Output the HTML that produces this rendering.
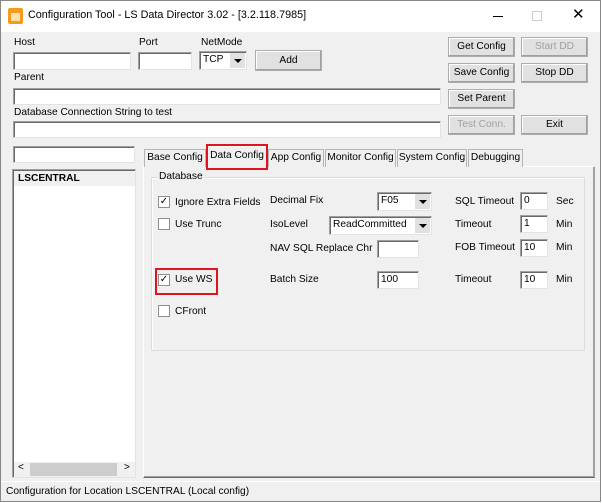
<!DOCTYPE html>
<html><head><style>
*{box-sizing:border-box;margin:0;padding:0}
body{width:602px;height:503px;background:#fff;font-family:"Liberation Sans",sans-serif;font-size:10.2px;color:#000;position:relative;overflow:hidden}
.a{position:absolute;white-space:nowrap}
.win{position:absolute;left:0;top:0;width:601px;height:502px;border:1px solid #888;background:#f0f0f0}
.tb{position:absolute;left:0;top:0;width:599px;height:31px;background:#fff}
.in{position:absolute;background:#fff;border:1px solid #a0a0a0;border-right-color:#e3e3e3;border-bottom-color:#e3e3e3;box-shadow:inset 1px 1px 0 #696969;padding:2px 3px;font-size:10.2px;white-space:nowrap}
.bt{position:absolute;background:#e1e1e1;border:1px solid #adadad;box-shadow:inset -1px -1px 0 #a0a0a0,inset 1px 1px 0 #fff;text-align:center;font-size:10.2px;white-space:nowrap}
.dis{color:#a0a0a0}
.cb{position:absolute;width:12px;height:12px;background:#fff;border:1px solid #8f8f8f;font-size:10px;line-height:10px;text-align:center}
.dd{position:absolute;right:1px;top:1px;width:15px;bottom:1px;background:#e1e1e1}
.dd:after{content:"";position:absolute;left:4px;top:6px;border:4px solid transparent;border-top:4px solid #000;border-bottom:0}
.tab{position:absolute;top:149px;height:18px;border:1px solid #b5b5b5;border-bottom:none;background:#f0f0f0;text-align:center;line-height:16px;white-space:nowrap}
.red{position:absolute;border:2px solid #e0141e}
</style></head><body>
<div class="win">
<div class="tb"></div>
</div>
<div class="a" style="left:8px;top:8px;width:15px;height:16px;background:#f39c1c;border-radius:2px"></div>
<div class="a" style="left:11px;top:13px;width:9px;height:8px;background:#fde2b0"></div>
<div class="a" style="left:28px;top:9px;font-size:10.8px">Configuration Tool - LS Data Director 3.02 - [3.2.118.7985]</div>
<div class="a" style="left:493px;top:16px;width:10px;height:1px;background:#000"></div>
<div class="a" style="left:532px;top:11px;width:10px;height:10px;border:1px solid #ccc"></div>
<div class="a" style="left:572px;top:5px;font-size:15px">✕</div>

<div class="a" style="left:14px;top:37px">Host</div>
<div class="in" style="left:13px;top:52px;width:118px;height:18px"></div>
<div class="a" style="left:139px;top:37px">Port</div>
<div class="in" style="left:138px;top:52px;width:54px;height:18px"></div>
<div class="a" style="left:201px;top:37px">NetMode</div>
<div class="in" style="left:199px;top:51px;width:48px;height:19px">TCP<div class="dd"></div></div>
<div class="bt" style="left:255px;top:50px;width:67px;height:21px;line-height:19px">Add</div>
<div class="a" style="left:14px;top:72px">Parent</div>
<div class="in" style="left:13px;top:88px;width:428px;height:17px"></div>
<div class="a" style="left:14px;top:107px">Database Connection String to test</div>
<div class="in" style="left:13px;top:121px;width:428px;height:17px"></div>

<div class="bt" style="left:448px;top:37px;width:67px;height:20px;line-height:18px">Get Config</div>
<div class="bt dis" style="left:521px;top:37px;width:67px;height:20px;line-height:18px">Start DD</div>
<div class="bt" style="left:448px;top:63px;width:67px;height:20px;line-height:18px">Save Config</div>
<div class="bt" style="left:521px;top:63px;width:67px;height:20px;line-height:18px">Stop DD</div>
<div class="bt" style="left:448px;top:89px;width:67px;height:20px;line-height:18px">Set Parent</div>
<div class="bt dis" style="left:448px;top:115px;width:67px;height:20px;line-height:18px">Test Conn.</div>
<div class="bt" style="left:521px;top:115px;width:67px;height:20px;line-height:18px">Exit</div>

<div class="in" style="left:13px;top:146px;width:122px;height:17px"></div>
<div class="in" style="left:12px;top:169px;width:124px;height:309px;padding:0"></div>
<div class="a" style="left:14px;top:171px;width:121px;height:15px;background:#f0f0f0"></div>
<div class="a" style="left:18px;top:173px;font-weight:bold">LSCENTRAL</div>
<div class="a" style="left:14px;top:462px;width:121px;height:15px;background:#f0f0f0"></div>
<div class="a" style="left:30px;top:463px;width:87px;height:13px;background:#cdcdcd"></div>
<div class="a" style="left:18px;top:462px;font-size:10px">&lt;</div>
<div class="a" style="left:124px;top:462px;font-size:10px">&gt;</div>

<div class="a" style="left:143px;top:166px;width:452px;height:312px;border:1px solid #fff;border-right-color:#a0a0a0;border-bottom-color:#696969;box-shadow:inset -1px -1px 0 #a0a0a0"></div>
<div class="tab" style="left:144px;width:62px">Base Config</div>
<div class="tab" style="left:207px;top:146px;width:60px;height:22px;border-color:#fff;line-height:18px">Data Config</div>
<div class="tab" style="left:268px;width:56px">App Config</div>
<div class="tab" style="left:325px;width:71px">Monitor Config</div>
<div class="tab" style="left:397px;width:70px">System Config</div>
<div class="tab" style="left:468px;width:55px">Debugging</div>
<div class="red" style="left:206px;top:144px;width:62px;height:26px"></div>

<div class="a" style="left:151px;top:177px;width:434px;height:174px;border:1px solid #dcdcdc;box-shadow:inset 1px 1px 0 #fff"></div>
<div class="a" style="left:157px;top:171px;background:#f0f0f0;padding:0 2px">Database</div>

<div class="cb" style="left:158px;top:196px">✓</div><div class="a" style="left:175px;top:197px">Ignore Extra Fields</div>
<div class="cb" style="left:158px;top:218px"></div><div class="a" style="left:175px;top:219px">Use Trunc</div>
<div class="cb" style="left:158px;top:274px">✓</div><div class="a" style="left:175px;top:274px">Use WS</div>
<div class="cb" style="left:158px;top:305px"></div><div class="a" style="left:175px;top:306px">CFront</div>
<div class="red" style="left:155px;top:268px;width:63px;height:27px"></div>

<div class="a" style="left:270px;top:195px">Decimal Fix</div>
<div class="in" style="left:377px;top:192px;width:55px;height:19px">F05<div class="dd"></div></div>
<div class="a" style="left:270px;top:219px">IsoLevel</div>
<div class="in" style="left:329px;top:216px;width:103px;height:19px">ReadCommitted<div class="dd"></div></div>
<div class="a" style="left:270px;top:243px">NAV SQL Replace Chr</div>
<div class="in" style="left:377px;top:240px;width:42px;height:18px"></div>
<div class="a" style="left:270px;top:274px">Batch Size</div>
<div class="in" style="left:377px;top:271px;width:42px;height:18px">100</div>

<div class="a" style="left:455px;top:196px">SQL Timeout</div>
<div class="in" style="left:520px;top:192px;width:28px;height:18px">0</div><div class="a" style="left:556px;top:196px">Sec</div>
<div class="a" style="left:455px;top:219px">Timeout</div>
<div class="in" style="left:520px;top:215px;width:28px;height:18px">1</div><div class="a" style="left:556px;top:219px">Min</div>
<div class="a" style="left:455px;top:242px">FOB Timeout</div>
<div class="in" style="left:520px;top:239px;width:28px;height:18px">10</div><div class="a" style="left:556px;top:242px">Min</div>
<div class="a" style="left:455px;top:274px">Timeout</div>
<div class="in" style="left:520px;top:271px;width:28px;height:18px">10</div><div class="a" style="left:556px;top:274px">Min</div>

<div class="a" style="left:1px;top:481px;width:599px;height:1px;background:#fff"></div>
<div class="a" style="left:6px;top:486px">Configuration for Location LSCENTRAL (Local config)</div>
</body></html>
